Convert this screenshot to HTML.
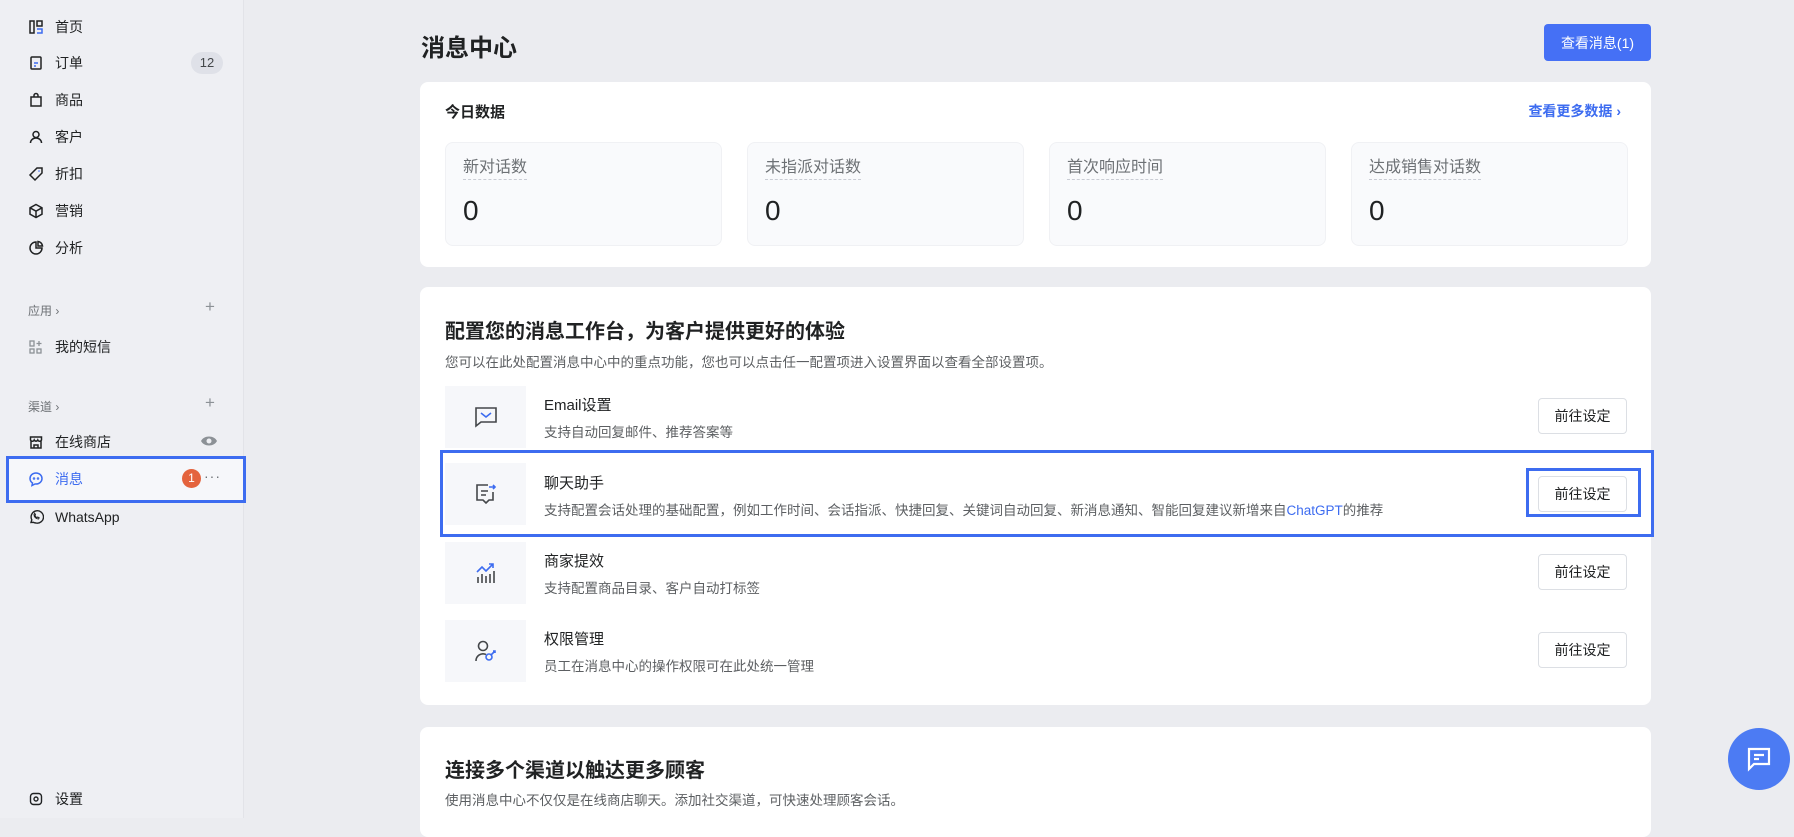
<!DOCTYPE html>
<html><head><meta charset="utf-8"><style>
*{box-sizing:border-box;margin:0;padding:0}
body{width:1794px;height:818px;overflow:hidden;background:#ebecf0;font-family:"Liberation Sans","Noto Sans CJK SC",sans-serif;color:#202223;position:relative}
.abs{position:absolute}
.side{left:0;top:0;width:244px;height:818px;background:#eeeff3;border-right:1px solid #e2e3e8}
.nav{position:absolute;left:28px;height:22px;display:flex;align-items:center;font-size:14px;color:#202223}
.nav svg{width:16px;height:16px;margin-right:11px}
.grp{position:absolute;left:28px;font-size:12px;color:#6d7175}
.plus{position:absolute;left:205px;font-size:17px;color:#8c9196}
.card{position:absolute;left:420px;width:1231px;background:#fff;border-radius:8px}
.stat{position:absolute;top:60px;width:277px;height:104px;background:#f9fafc;border:1px solid #f0f1f4;border-radius:8px}
.stat .l{position:absolute;left:17px;top:14px;font-size:16px;color:#6d7175;border-bottom:1px dashed #c9ccd4;line-height:22px}
.stat .v{position:absolute;left:17px;top:52px;font-size:28px;color:#202223}
.ib{position:absolute;left:25px;width:81px;height:62px;background:#f6f7fa;display:flex;align-items:center;justify-content:center}
.rt{position:absolute;left:124px;font-size:15px;color:#202223}
.rd{position:absolute;left:124px;font-size:13.5px;color:#5c5f62}
.btn{position:absolute;left:1118px;width:89px;height:36px;border:1px solid #dcdfe4;border-radius:4px;background:#fff;font-size:14px;color:#202223;display:flex;align-items:center;justify-content:center}
</style></head><body>
<div class="abs side"></div>
<div class="nav" style="top:16px"><svg viewBox="0 0 16 16" fill="none" stroke="#202223" stroke-width="1.5"><rect x="2" y="2" width="4" height="12"/><rect x="9" y="2" width="5" height="5"/><path d="M9 10h5v4h-5" stroke="#3d6cf0"/></svg>首页</div>
<div class="nav" style="top:52px"><svg viewBox="0 0 16 16" fill="none" stroke="#202223" stroke-width="1.5"><rect x="3" y="2" width="10" height="12" rx="1"/><path d="M6 8h4M6 11h2" stroke="#3d6cf0"/></svg>订单</div>
<div class="abs" style="left:191px;top:52px;width:32px;height:22px;border-radius:11px;background:#dfe1e8;font-size:13px;color:#44474a;text-align:center;line-height:22px">12</div>
<div class="nav" style="top:89px"><svg viewBox="0 0 16 16" fill="none" stroke="#202223" stroke-width="1.5"><path d="M3 5h10v9H3zM6 5V3.5a2 2 0 014 0V5"/></svg>商品</div>
<div class="nav" style="top:126px"><svg viewBox="0 0 16 16" fill="none" stroke="#202223" stroke-width="1.5"><circle cx="8" cy="5.5" r="3"/><path d="M2.5 14a5.5 5 0 0111 0"/></svg>客户</div>
<div class="nav" style="top:163px"><svg viewBox="0 0 16 16" fill="none" stroke="#202223" stroke-width="1.5"><path d="M9 2h5v5l-7 7-5-5z"/><circle cx="11" cy="5" r=".8" fill="#3d6cf0" stroke="none"/></svg>折扣</div>
<div class="nav" style="top:200px"><svg viewBox="0 0 16 16" fill="none" stroke="#202223" stroke-width="1.5"><path d="M8 1.5l6 3.3v6.4L8 14.5l-6-3.3V4.8zM2 4.8l6 3.3 6-3.3M8 8.1v6.4"/></svg>营销</div>
<div class="nav" style="top:237px"><svg viewBox="0 0 16 16" fill="none" stroke="#202223" stroke-width="1.5"><path d="M8 2a6 6 0 106 6H8z"/><path d="M10 1.5a5 5 0 014.5 4.5H10z"/></svg>分析</div>
<div class="grp" style="top:302px">应用 ›</div><div class="plus" style="top:297px">+</div>
<div class="nav" style="top:336px"><svg viewBox="0 0 16 16" fill="none" stroke="#8c9196" stroke-width="1.3"><rect x="2" y="2" width="4" height="5"/><rect x="2" y="10" width="4" height="4"/><rect x="9" y="10" width="4" height="4"/><path d="M11 2v5M8.5 4.5h5"/></svg>我的短信</div>
<div class="grp" style="top:398px">渠道 ›</div><div class="plus" style="top:393px">+</div>
<div class="nav" style="top:431px"><svg viewBox="0 0 16 16" fill="none" stroke="#202223" stroke-width="1.5"><path d="M2.5 6V3h11v3a2 2 0 01-3.7 0 2 2 0 01-3.6 0 2 2 0 01-3.7 0zM3 7v7h10V7M6 14v-3h4v3"/></svg>在线商店</div>
<svg class="abs" style="left:200px;top:434px" width="18" height="14" viewBox="0 0 18 14"><path d="M1 7c3-6 13-6 16 0-3 6-13 6-16 0z" fill="#8c9196"/><circle cx="9" cy="7" r="2.5" fill="#eeeff3"/></svg>
<div class="abs" style="left:6px;top:456px;width:240px;height:47px;border:3.5px solid #3d6cf0;background:#f6f7fa"></div>
<div class="nav" style="top:468px;color:#3d6cf0"><svg viewBox="0 0 16 16" fill="none" stroke="#3d6cf0" stroke-width="1.5"><path d="M8 2a6 5.5 0 00-6 5.5c0 2 1 3.5 2.5 4.5L4 14.5l3-1.5a7 6 0 001 0A6 5.5 0 008 2z"/><circle cx="6" cy="7.5" r=".5"/><circle cx="10" cy="7.5" r=".5"/></svg>消息</div>
<div class="abs" style="left:182px;top:469px;width:19px;height:19px;border-radius:50%;background:#e4633d;color:#fff;font-size:12px;text-align:center;line-height:19px">1</div>
<div class="abs" style="left:204px;top:468px;font-size:14px;color:#6d7175;letter-spacing:1px">···</div>
<div class="nav" style="top:506px"><svg viewBox="0 0 16 16" fill="none" stroke="#202223" stroke-width="1.4"><path d="M3 13.5l.8-2.7A6.2 6.2 0 118 14a6 6 0 01-2.7-.7z"/><path d="M6 5.5c0 2.5 2 4.5 4.5 4.5l.7-1.2-1.5-.8-.7.6c-1-.4-1.7-1.2-2.1-2.1l.6-.7-.8-1.5z" stroke-width="1"/></svg>WhatsApp</div>
<div class="nav" style="top:788px"><svg viewBox="0 0 16 16" fill="none" stroke="#202223" stroke-width="1.4"><rect x="2.5" y="2.5" width="11" height="11" rx="3"/><circle cx="8" cy="8" r="2"/></svg>设置</div>

<div class="abs" style="left:421px;top:28px;font-size:24px;font-weight:bold;color:#202223">消息中心</div>
<div class="abs" style="left:1544px;top:24px;width:107px;height:37px;background:#4570f5;border-radius:4px;color:#fff;font-size:14px;display:flex;align-items:center;justify-content:center">查看消息(1)</div>

<div class="card" style="top:82px;height:185px">
 <div class="abs" style="left:25px;top:19px;font-size:15px;font-weight:bold">今日数据</div>
 <div class="abs" style="right:30px;top:19px;font-size:14px;font-weight:bold;color:#3d6cf0">查看更多数据 ›</div>
 <div class="stat" style="left:25px"><div class="l">新对话数</div><div class="v">0</div></div>
 <div class="stat" style="left:327px"><div class="l">未指派对话数</div><div class="v">0</div></div>
 <div class="stat" style="left:629px"><div class="l">首次响应时间</div><div class="v">0</div></div>
 <div class="stat" style="left:931px"><div class="l">达成销售对话数</div><div class="v">0</div></div>
</div>

<div class="card" style="top:287px;height:418px">
 <div class="abs" style="left:25px;top:28px;font-size:20px;font-weight:bold">配置您的消息工作台，为客户提供更好的体验</div>
 <div class="abs" style="left:25px;top:64px;font-size:13.5px;color:#5c5f62">您可以在此处配置消息中心中的重点功能，您也可以点击任一配置项进入设置界面以查看全部设置项。</div>
 <div class="ib" style="top:99px"><svg width="24" height="22" viewBox="0 0 24 22" fill="none" stroke="#44474a" stroke-width="1.6"><path d="M2 2h20v14H7l-5 4z"/><path d="M7 7l5 4 5-4" stroke="#3d6cf0"/></svg></div>
 <div class="rt" style="top:107px">Email设置</div><div class="rd" style="top:134px">支持自动回复邮件、推荐答案等</div>
 <div class="btn" style="top:111px">前往设定</div>
 <div class="ib" style="top:176px"><svg width="24" height="24" viewBox="0 0 24 24" fill="none" stroke="#44474a" stroke-width="1.6"><path d="M14 3H3v15h6l3 3 3-3h4v-8"/><path d="M7 9h7M7 13h5"/><path d="M15 5h6M19 3l2 2-2 2" stroke="#3d6cf0"/></svg></div>
 <div class="rt" style="top:185px">聊天助手</div><div class="rd" style="top:212px">支持配置会话处理的基础配置，例如工作时间、会话指派、快捷回复、关键词自动回复、新消息通知、智能回复建议新增来自<span style="color:#3d6cf0">ChatGPT</span>的推荐</div>
 <div class="btn" style="top:189px">前往设定</div>
 <div class="ib" style="top:255px"><svg width="24" height="24" viewBox="0 0 24 24" fill="none" stroke="#44474a" stroke-width="1.6"><path d="M4 22v-6M8 22v-9M12 22v-7M16 22v-9M20 22v-12"/><path d="M3 11l5-5 4 4 7-7M15 3h4v4" stroke="#3d6cf0"/></svg></div>
 <div class="rt" style="top:263px">商家提效</div><div class="rd" style="top:290px">支持配置商品目录、客户自动打标签</div>
 <div class="btn" style="top:267px">前往设定</div>
 <div class="ib" style="top:333px"><svg width="26" height="26" viewBox="0 0 26 26" fill="none" stroke="#44474a" stroke-width="1.6"><circle cx="10" cy="8" r="4.5"/><path d="M3 23a7 7 0 0110-6.5"/><circle cx="16" cy="19" r="3" stroke="#3d6cf0"/><path d="M18 17l4-4M20 13h2v2" stroke="#3d6cf0"/></svg></div>
 <div class="rt" style="top:341px">权限管理</div><div class="rd" style="top:368px">员工在消息中心的操作权限可在此处统一管理</div>
 <div class="btn" style="top:345px">前往设定</div>
</div>
<div class="abs" style="left:440px;top:450px;width:1214px;height:87px;border:3.5px solid #3d6cf0"></div>
<div class="abs" style="left:1526px;top:468px;width:115px;height:49px;border:3.5px solid #3d6cf0"></div>

<div class="card" style="top:727px;height:110px">
 <div class="abs" style="left:25px;top:27px;font-size:20px;font-weight:bold">连接多个渠道以触达更多顾客</div>
 <div class="abs" style="left:25px;top:62px;font-size:13.5px;color:#5c5f62">使用消息中心不仅仅是在线商店聊天。添加社交渠道，可快速处理顾客会话。</div>
</div>
<div class="abs" style="left:1728px;top:728px;width:62px;height:62px;border-radius:50%;background:#4c7bf3;display:flex;align-items:center;justify-content:center"><svg width="26" height="26" viewBox="0 0 26 26" fill="none" stroke="#fff" stroke-width="2.2"><path d="M3 3h20v15H8l-5 5z"/><path d="M8 9h10M8 13h5"/></svg></div>
</body></html>
